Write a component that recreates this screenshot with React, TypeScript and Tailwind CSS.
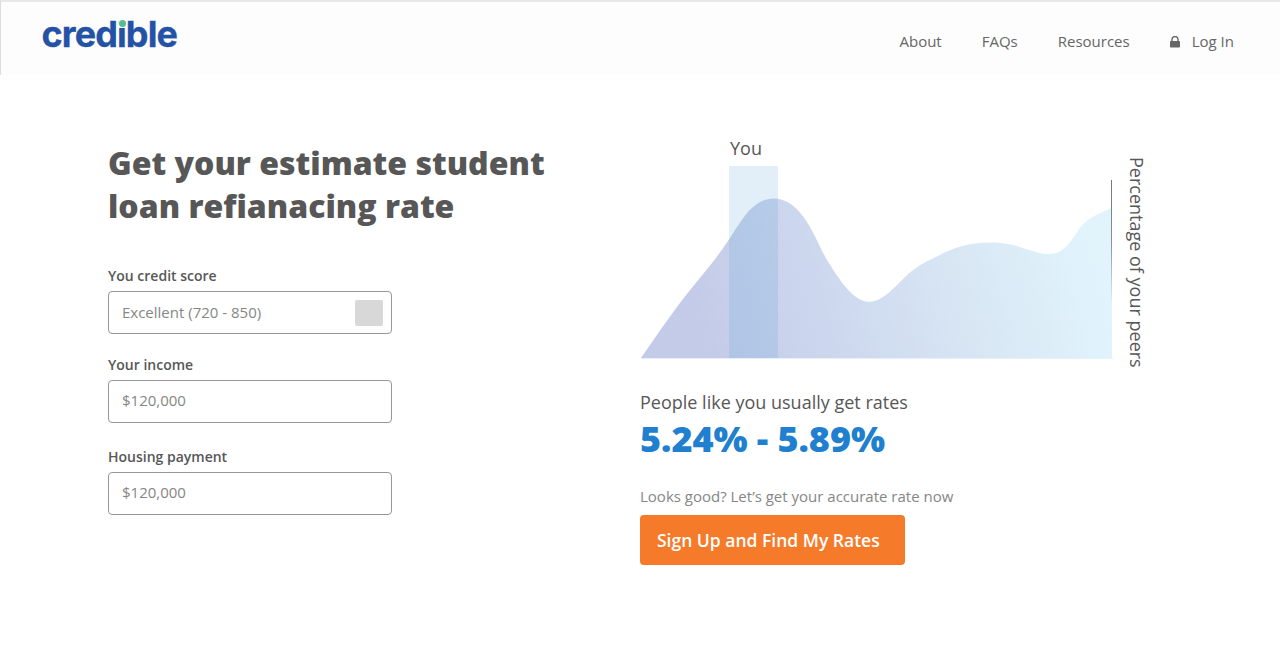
import React from "react";

function Logo() {
  return (
    <a className="relative block h-[36px] w-[140px] pl-[0.5px] font-['Inter',sans-serif] text-[36px] font-bold leading-[36px] tracking-[-0.9px] text-[#2453a6] [-webkit-text-stroke:0.3px_#2453a6]">
      credible
      <span className="absolute left-[77.5px] top-[1px] h-[11px] w-[8px] bg-[#fdfdfd]" />
      <span className="absolute left-[78px] top-[4px] h-[7px] w-[7px] rounded-full bg-[#57bd8f]" />
    </a>
  );
}

function LockIcon() {
  return (
    <svg width="10" height="12" viewBox="0 0 10 12" className="mr-[12px] mt-px">
      <path d="M2 5.5V3.5a3 3 0 0 1 6 0v2" fill="none" stroke="#666666" strokeWidth="1.4" />
      <rect x="0" y="5" width="10" height="6.5" rx="0.8" fill="#666666" />
    </svg>
  );
}

function Field({ label, value, select, className }: { label: string; value: string; select?: boolean; className: string }) {
  return (
    <div className={className}>
      <div className="h-[20px] whitespace-nowrap text-[14px] font-semibold leading-[20px] text-[#575757]">{label}</div>
      <div className="mt-[5px] flex h-[43px] w-[284px] items-center justify-between rounded-[4px] border border-[#979797] bg-white pr-[8px] pl-[13px]">
        <span className={select ? "pb-[2px] text-[15px] leading-[20px] text-[#868686]" : "pb-[4px] text-[15px] leading-[20px] text-[#868686]"}>{value}</span>
        {select && <span className="h-[26px] w-[28px] rounded-[2px] bg-[#d8d8d8]" />}
      </div>
    </div>
  );
}

function Chart() {
  return (
    <svg width="474" height="194" viewBox="640 166 474 194" className="block">
      <defs>
        <linearGradient id="area" gradientUnits="userSpaceOnUse" x1="700" y1="320" x2="1085" y2="215">
          <stop offset="0" stopColor="#c4cbe8" />
          <stop offset="0.3" stopColor="#ccd7ee" />
          <stop offset="0.65" stopColor="#d8e6f4" />
          <stop offset="1" stopColor="#e1f4fc" />
        </linearGradient>
        <linearGradient id="axis" x1="0" y1="0" x2="0" y2="1">
          <stop offset="0" stopColor="#777777" />
          <stop offset="0.35" stopColor="#8b9196" />
          <stop offset="0.7" stopColor="#e1f4fc" />
          <stop offset="1" stopColor="#e1f4fc" />
        </linearGradient>
      </defs>
      <path
        d="M641 358C659 332 678 304 697 281.500C705 271.500 710 266 717 256.500C731 238 737 225.500 747 213C755 203.500 764 198.400 773.500 198.400C785 198.400 795 205 804 217.500C813 230 820 248 827 260C834 271 839 279 844 285C852 295 860 301.700 869 301.700C881 301.700 891 291 900 282C912 269.500 921 264 933 258.500C951 249 965 242.600 991 242.600C1019 242.600 1032 254 1049 254C1064 254 1071 241 1078 231C1085 220 1092 216.500 1112 207.700V358Z"
        fill="url(#area)"
      />
      <rect x="641" y="358" width="472" height="1" fill="#e8eff9" />
      <rect x="729" y="166" width="49" height="192" fill="#3e94d0" fillOpacity="0.15" />
      <rect x="1111" y="180" width="1" height="178" fill="url(#axis)" />
    </svg>
  );
}

export default function App() {
  return (
    <div className="flex h-[672px] w-[1280px] flex-col overflow-hidden bg-white font-['Open_Sans',sans-serif]">
      <header className="flex h-[75px] shrink-0 items-start justify-between border-t-2 border-l border-t-[#e8e8e8] border-l-[#dcdcdc] bg-[#fdfdfd] pt-[14px] pr-[46px] pl-[40px]">
        <Logo />
        <nav className="mt-[15px] flex h-[20px] items-center text-[15px] leading-[20px] whitespace-nowrap text-[#666666]">
          <a className="mr-[40px]">About</a>
          <a className="mr-[40px]">FAQs</a>
          <a className="mr-[40px]">Resources</a>
          <a className="flex items-center"><LockIcon />Log In</a>
        </nav>
      </header>
      <main className="flex flex-1 pl-[108px]">
        <section className="w-[532px] pt-[66px]">
          <h1 className="h-[86px] text-[32px] leading-[43px] font-extrabold whitespace-nowrap text-[#575757]">
            Get your estimate student<br />loan refianacing rate
          </h1>
          <Field className="mt-[39px]" label="You credit score" value="Excellent (720 - 850)" select />
          <Field className="mt-[21px]" label="Your income" value="$120,000" />
          <Field className="mt-[24px]" label="Housing payment" value="$120,000" />
        </section>
        <section className="w-[520px] pt-[60px] text-[#575757]">
          <div className="flex">
            <div className="w-[474px]">
              <div className="h-[31px] pl-[90px] text-[18px] leading-[26px]">You</div>
              <Chart />
            </div>
            <div className="ml-[10px] pt-[22px] text-[18px] leading-[26px] whitespace-nowrap [writing-mode:vertical-rl]">Percentage of your peers</div>
          </div>
          <p className="mt-[21px] h-[26px] text-[18px] leading-[26px] whitespace-nowrap">People like you usually get rates</p>
          <p className="h-[48px] text-[36px] leading-[48px] font-extrabold tracking-[-0.06px] whitespace-nowrap text-[#217fd0]">5.24% - 5.89%</p>
          <p className="mt-[23px] h-[20px] text-[15px] leading-[20px] whitespace-nowrap text-[#868686]">Looks good? Let’s get your accurate rate now</p>
          <button className="mt-[9px] flex h-[50px] w-[264.5px] items-center rounded-[4px] bg-[#f57a2a] pl-[17px] text-[17.5px] font-semibold whitespace-nowrap text-white">Sign Up and Find My Rates</button>
        </section>
      </main>
    </div>
  );
}
